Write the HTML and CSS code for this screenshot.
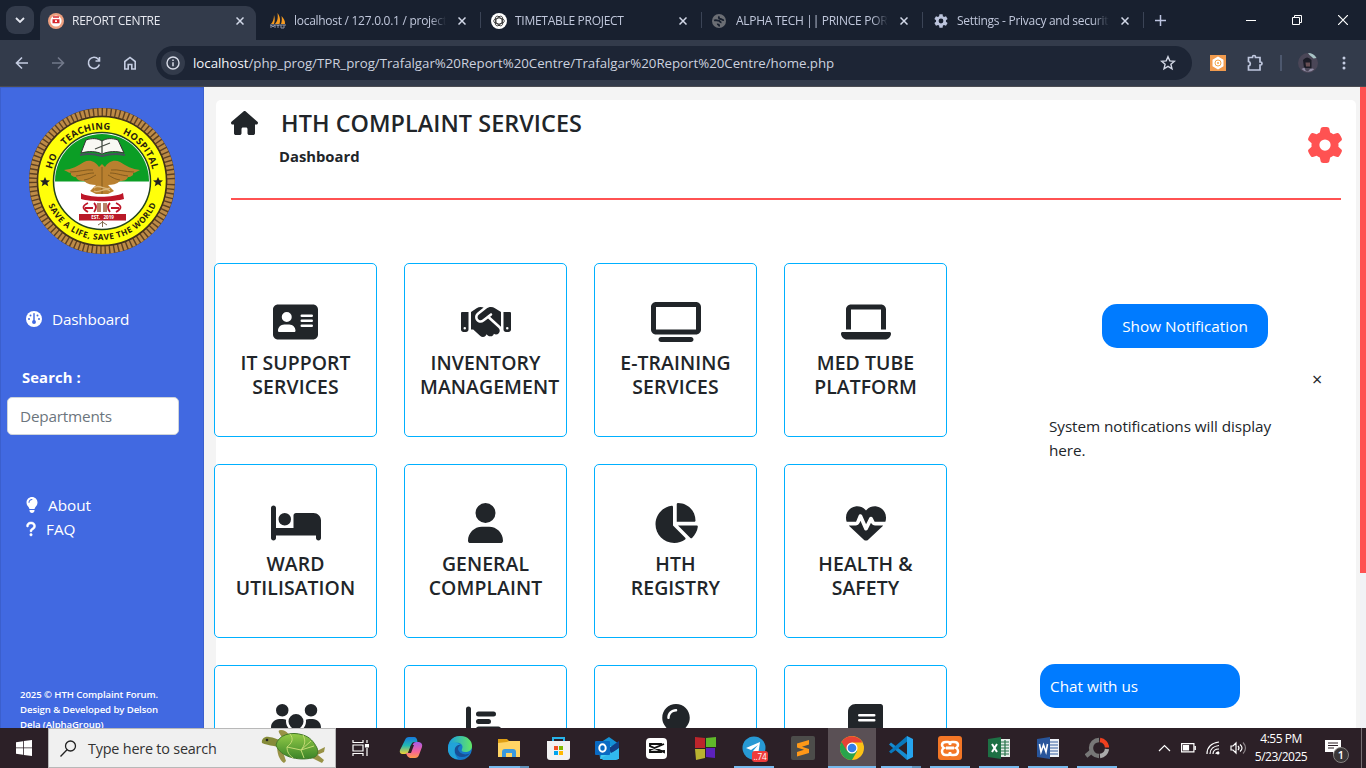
FILE: index.html
```html
<!DOCTYPE html>
<html lang="en">
<head>
<meta charset="utf-8">
<title>REPORT CENTRE</title>
<link rel="stylesheet" href="styles.css">
</head>
<body>
<header class="tabs">
  <div class="tab-search"><svg width="10" height="6" viewBox="0 0 10 6" fill="none" stroke="#e3e6ef" stroke-width="1.8"><path d="M1 1l4 4 4-4"/></svg></div>
  <div class="tab active">
    <svg class="fav" viewBox="0 0 16 16"><circle cx="8" cy="8" r="8" fill="#ee9f7f"/><circle cx="8" cy="8" r="5.600" fill="#fff"/><path d="M5 3.200h6v1.500H5zM4.500 6.200h7v4h-7z" fill="#d8292f"/><path d="M7 7.300h2v1.600H7z" fill="#fff"/></svg>
    <span class="tab-title">REPORT CENTRE</span><svg class="close" viewBox="0 0 8 8"><path d="M.5.5l7 7M7.5.5l-7 7"/></svg>
  </div>
  <div class="tab">
    <svg class="fav" viewBox="0 0 16 16"><path d="M1 11C3 9 4 5 4 2c1 3 1 6 0 9zM5 11C8 8 8 4 7.500 0c3 4 3 8 2 11zM11 11c1-3 1-5 .5-8 2 2 4 5 3.500 8z" fill="#f59a20"/><path d="M0 12h16M1 15v-3l2 2 2-2v3M7 12l1 1 1-1M8 13v2M11 12v3h3v-3" stroke="#8d92a4" stroke-width="1" fill="none"/></svg>
    <span class="tab-title">localhost / 127.0.0.1 / project</span><svg class="close" viewBox="0 0 8 8"><path d="M.5.5l7 7M7.5.5l-7 7"/></svg>
  </div>
  <div class="tab">
    <svg class="fav" viewBox="0 0 16 16"><circle cx="8" cy="8" r="8" fill="#fff"/><g fill="none" stroke="#222" stroke-width=".8"><ellipse cx="8" cy="8" rx="5.300" ry="3"/><ellipse cx="8" cy="8" rx="5.300" ry="3" transform="rotate(60 8 8)"/><ellipse cx="8" cy="8" rx="5.300" ry="3" transform="rotate(120 8 8)"/></g></svg>
    <span class="tab-title">TIMETABLE PROJECT</span><svg class="close" viewBox="0 0 8 8"><path d="M.5.5l7 7M7.5.5l-7 7"/></svg>
  </div>
  <div class="tab">
    <svg class="fav" viewBox="0 0 16 16"><circle cx="7" cy="8" r="7" fill="#6b6e74"/><path d="M2 7.500c2-.8 3 .2 4.500.2 1.500.2 1.500 1.800 3 1.600M7.500 3.500c-1.500 1.200-.5 2.500 1 2.500s1.500 1.500 3.500 1M5 11.500c1.500-.5 2.500.5 2 2" fill="none" stroke="#18202f" stroke-width="1.800"/></svg>
    <span class="tab-title">ALPHA TECH || PRINCE PORTFOLIO</span><svg class="close" viewBox="0 0 8 8"><path d="M.5.5l7 7M7.5.5l-7 7"/></svg>
  </div>
  <div class="tab">
    <svg class="fav" viewBox="0 0 24 24"><path fill="#bcc4dc" d="M19.400 13a7.500 7.500 0 0 0 0-2l2.500-2-2.400-4.200-3 1.200a7 7 0 0 0-1.700-1L14.400 2H9.600l-.4 3a7 7 0 0 0-1.700 1l-3-1.200L2.100 9l2.500 2a7.500 7.500 0 0 0 0 2l-2.500 2 2.400 4.200 3-1.200a7 7 0 0 0 1.700 1l.4 3h4.800l.4-3a7 7 0 0 0 1.700-1l3 1.200 2.400-4.200zM12 15.600a3.600 3.600 0 1 1 0-7.200 3.600 3.600 0 0 1 0 7.200z"/></svg>
    <span class="tab-title">Settings - Privacy and security</span><svg class="close" viewBox="0 0 8 8"><path d="M.5.5l7 7M7.5.5l-7 7"/></svg>
  </div>
  <svg class="new-tab" width="11" height="11" viewBox="0 0 11 11"><path d="M5.500 0v11M0 5.500h11" stroke="#bcc4e0" stroke-width="1.500"/></svg>
  <div class="win">
    <svg width="10" height="10" viewBox="0 0 10 10"><path d="M0 5.500h10"/></svg>
    <svg width="10" height="10" viewBox="0 0 10 10"><path d="M.5 2.500h7v7h-7zM2.500 2.500v-2h7v7h-2"/></svg>
    <svg width="10" height="10" viewBox="0 0 10 10"><path d="M0 0l10 10M10 0L0 10" stroke-width="1.200"/></svg>
  </div>
</header>
<nav class="toolbar">
  <svg class="tool" viewBox="0 0 16 16"><path d="M14 8H3M8 2.500L2.500 8 8 13.500"/></svg>
  <svg class="tool dim" viewBox="0 0 16 16"><path d="M2 8h11M8 2.500L13.500 8 8 13.500"/></svg>
  <svg class="tool" viewBox="0 0 16 16"><path d="M13.400 9.500A5.600 5.600 0 1 1 12.300 4.200L13.500 5.600M13.500 2v4H9.500"/></svg>
  <svg class="tool" viewBox="0 0 16 16"><path d="M2.800 14V6.500L8 2.400l5.200 4.100V14H9.800V9.500H6.200V14z"/></svg>
  <div class="omnibox">
    <span class="info"><svg width="14" height="14" viewBox="0 0 14 14"><circle cx="7" cy="7" r="6" fill="none" stroke="#d8dce8" stroke-width="1.400"/><path d="M7 6.200v4M7 3.600v1.500" stroke="#d8dce8" stroke-width="1.500"/></svg></span>
    <span class="url"><b>localhost</b>/php_prog/TPR_prog/Trafalgar%20Report%20Centre/Trafalgar%20Report%20Centre/home.php</span>
    <svg class="star" viewBox="0 0 16 16"><path d="M8 1.700l1.800 4.200 4.600.4-3.500 3 1.100 4.500L8 11.400l-4 2.400 1.100-4.500-3.500-3 4.600-.4z" fill="none" stroke="#d3d8e6" stroke-width="1.400"/></svg>
  </div>
  <svg class="ext" viewBox="0 0 16 16"><path fill="#f19b4e" d="M0 0h16v16H0z"/><path fill="#fff" d="M8 1.500l5.500 3.200v6.600L8 14.500l-5.500-3.200V4.700z"/><circle cx="8" cy="8" r="3" fill="none" stroke="#f3a64d"/><circle cx="8" cy="8" r="1" fill="#f3a64d"/></svg>
  <svg class="puzzle" viewBox="0 0 18 18"><path d="M2.500 3.500H6.500V3a1.500 1.500 0 0 1 3 0v.5h4.500v4.500h.5a1.500 1.500 0 0 1 0 3H14v5H2.500v-4a2.300 2.300 0 0 0 0-4.500z" fill="none" stroke="#c0c8df" stroke-width="1.700"/></svg>
  <i class="bar-sep"></i>
  <svg class="avatar" viewBox="0 0 20 20"><circle cx="10" cy="10" r="10" fill="#4a4657"/><path d="M10 0a10 10 0 0 1 8.500 5l-3 .5-4-3.500z" fill="#a9c4c6"/><path d="M5 7q4-5 8.500 0v8H6z" fill="#1b1c27"/><path d="M3.500 16l3-1.500 1 3 2.500 1 2-2.500 3-.5 1 1a9 9 0 0 1-12.500-.5z" fill="#8f8ba3"/><path d="M7.500 9.500h4.500v4H8z" fill="#684f54"/></svg>
  <svg class="dots" viewBox="0 0 4 14"><circle cx="2" cy="2" r="1.500"/><circle cx="2" cy="7" r="1.500"/><circle cx="2" cy="12" r="1.500"/></svg>
</nav>

<div class="page">
  <aside class="sidebar">
    <svg class="logo" viewBox="0 0 148 148">
      <defs><path id="arcTop" d="M23.500 84A51.500 51.500 0 1 1 124.500 84"/><path id="arcBottom" d="M15 74A59 59 0 0 0 133 74"/><clipPath id="disc"><circle cx="74" cy="74" r="47"/></clipPath></defs>
      <circle cx="74" cy="74" r="68.500" fill="none" stroke="#5d4021" stroke-width="9"/>
      <circle cx="74" cy="74" r="69" fill="none" stroke="#bd8b47" stroke-width="7.500" stroke-dasharray="3 1.400"/>
      <circle cx="74" cy="74" r="64.500" fill="#ffff0a" stroke="#42331b" stroke-width="1.500"/>
      <circle cx="74" cy="74" r="48.500" fill="#fff" stroke="#23431d" stroke-width="1.500"/>
      <path d="M26 74.500h96V20H26z" fill="#0b9e25" clip-path="url(#disc)"/>
      <path d="M53 46l5-13c6-2 11-2 16 1 5-3 10-3 16-1l6 13c-8-2-15-2-22 1-6-3-13-3-21-1z" fill="#f8f8f3" stroke="#333" stroke-width="1"/>
      <path d="M52 48c9-2 15-1 22 1 7-2 14-3 23-1" stroke="#46525c" stroke-width="2" fill="none"/><path d="M74 34v12M67 42l15-6" stroke="#434a42" stroke-width="1.300"/>
      <path d="M74 57l-3 3c-3-5-9-8-15-5-6 4-12 7-20 8 4 2 5 3 7 3-1 2 2 4 5 4 1 3 4 4 8 4 3 3 8 4 12 4l-6 6 6 3h12l6-3-6-6c4 0 9-1 12-4 4 0 7-1 8-4 3 0 6-2 5-4 2 0 3-1 7-3-8-1-14-4-20-8-6-3-12 0-15 5z" fill="#b9802f"/>
      <path d="M42 65c9 0 16-3 23-2M48 69c8-1 12-3 18-3M56 73c6-1 8-3 12-5M106 65c-9 0-16-3-23-2M100 69c-8-1-12-3-18-3M92 73c-6-1-8-3-12-5M74 60v27" stroke="#74501a" stroke-width=".8" fill="none"/>
      <path d="M66 81c4-5 12 3 16 0M66 84c4 3 12-5 16 0" stroke="#dbb678" stroke-width="1.300" fill="none"/>
      <path d="M53 86c7 5 33 5 42 0l1 6c-9 3-34 3-43 0z" fill="#bd1628"/>
      <path d="M60 96q-9 4 0 9M57 101h8M66 96q4 4 0 9M88 96q9 4 0 9M91 101h-8M82 96q-4 4 0 9" stroke="#bd1628" stroke-width="1.800" fill="none"/>
      <path d="M69 96h4v9h-4zM75 96h4v9h-4z" fill="#b98167"/><path d="M51 107h47v6.500H51z" fill="#b91928"/>
      <text class="est" x="74.500" y="112" text-anchor="middle">EST. &#160; 2019</text><path d="M74.500 114v6M70 118l4.500-3 4.500 3" stroke="#846c50" fill="none"/>
      <path d="M17 70l1.500 3.200 3.500.2-2.700 2.300 1 3.500-3.300-2-3.300 2 1-3.500-2.700-2.300 3.500-.2zM130 70l1.500 3.200 3.500.2-2.700 2.300 1 3.500-3.300-2-3.300 2 1-3.500-2.700-2.300 3.500-.2z" fill="#222"/>
      <text class="seal"><textPath href="#arcTop" startOffset="22">HO</textPath></text>
      <text class="seal"><textPath href="#arcTop" startOffset="49">TEACHING</textPath></text>
      <text class="seal"><textPath href="#arcTop" startOffset="112">HOSPITAL</textPath></text>
      <text class="seal small"><textPath href="#arcBottom" startOffset="25" textLength="136">SAVE A LIFE, SAVE THE WORLD</textPath></text>
    </svg>
    <a class="nav nav-dashboard"><svg width="16" height="16" viewBox="0 0 512 512"><circle cx="256" cy="256" r="256" fill="#fff"/><path d="M256 85v230" stroke="#4169e1" stroke-width="46" stroke-linecap="round"/><g fill="#4169e1"><circle cx="256" cy="352" r="62"/><circle cx="144" cy="144" r="32"/><circle cx="368" cy="144" r="32"/><circle cx="96" cy="256" r="32"/><circle cx="416" cy="256" r="32"/></g></svg><span>Dashboard</span></a>
    <label class="search-label">Search :</label>
    <input class="search" placeholder="Departments">
    <div class="links">
      <a class="nav"><svg width="12" height="16" viewBox="0 0 384 512"><path fill="#fff" d="M272 384c9.600-31.900 29.500-59.100 49.200-86.200 5.200-7.100 10.400-14.200 15.400-21.400 19.800-28.500 31.400-63 31.400-100.300C368 78.800 289.200 0 192 0S16 78.800 16 176c0 37.300 11.600 71.900 31.400 100.300 5 7.200 10.200 14.300 15.400 21.400 19.800 27.100 39.700 54.400 49.200 86.200H272zM192 512c44.200 0 80-35.800 80-80V416H112v16c0 44.200 35.800 80 80 80zM112 176c0 8.800-7.200 16-16 16s-16-7.200-16-16c0-61.900 50.100-112 112-112 8.800 0 16 7.200 16 16s-7.200 16-16 16c-44.200 0-80 35.800-80 80z"/></svg><span>About</span></a>
      <a class="nav"><svg width="10" height="16" viewBox="0 0 320 512"><path fill="#fff" stroke="#fff" stroke-width="16" d="M80 160c0-35.300 28.700-64 64-64h32c35.300 0 64 28.700 64 64v3.600c0 21.800-11.100 42.100-29.400 53.800l-42.200 27.100c-25.200 16.200-40.400 44.100-40.400 74V320c0 17.700 14.300 32 32 32s32-14.300 32-32v-1.400c0-8.200 4.200-15.800 11-20.200l42.200-27.100c36.600-23.600 58.800-64.100 58.800-107.700V160c0-70.700-57.300-128-128-128H144C73.300 32 16 89.300 16 160c0 17.700 14.300 32 32 32s32-14.300 32-32zm80 320a40 40 0 1 0 0-80 40 40 0 1 0 0 80z"/></svg><span>FAQ</span></a>
    </div>
    <footer class="copy">2025 © HTH Complaint Forum.<br>Design &amp; Developed by Delson<br>Dela (AlphaGroup)</footer>
  </aside>
  <main class="main">
    <section class="panel">
      <div class="heading">
        <svg width="27" height="24" viewBox="0 0 576 512"><path fill="#212529" d="M575.800 255.500c0 18-15 32.100-32 32.100h-32l.7 160.200c0 2.700-.2 5.400-.5 8.100V472c0 22.100-17.900 40-40 40H392c-22.100 0-40-17.900-40-40V384c0-17.700-14.300-32-32-32H256c-17.700 0-32 14.300-32 32v88c0 22.100-17.900 40-40 40H104c-22.100 0-40-17.900-40-40V287.600H32c-18 0-32-14-32-32.100 0-9 3-17 10-24L266.400 8c7-7 15-8 22-8s15 2 21 7L564.800 231.500c8 7 12 15 11 24z"/></svg>
        <div class="titles"><h1>HTH COMPLAINT SERVICES</h1><p>Dashboard</p></div>
        <svg class="gear" width="36" height="36" viewBox="0 0 512 512"><path fill="#ff5252" d="M495.900 166.600c3.200 8.700.5 18.400-6.400 24.600l-43.300 39.400c1.100 8.300 1.700 16.800 1.700 25.400s-.6 17.100-1.700 25.400l43.300 39.400c6.900 6.200 9.600 15.900 6.400 24.600-4.400 11.900-9.700 23.300-15.800 34.300l-4.700 8.100c-6.600 11-14 21.400-22.100 31.200-5.900 7.200-15.700 9.600-24.500 6.800l-55.700-17.700c-13.400 10.300-28.200 18.900-44 25.400l-12.500 57.100c-2 9.100-9 16.300-18.200 17.800-13.800 2.300-28 3.500-42.500 3.500s-28.700-1.200-42.500-3.500c-9.200-1.500-16.200-8.700-18.200-17.800l-12.500-57.100c-15.800-6.500-30.600-15.100-44-25.400L83.100 425.900c-8.800 2.800-18.600.3-24.500-6.800-8.100-9.800-15.500-20.200-22.100-31.200l-4.700-8.100c-6.100-11-11.400-22.400-15.800-34.300-3.200-8.700-.5-18.400 6.400-24.600l43.300-39.400C64.600 273.100 64 264.600 64 256s.6-17.100 1.700-25.400L22.400 191.200c-6.900-6.200-9.600-15.900-6.400-24.600 4.400-11.900 9.700-23.300 15.800-34.300l4.700-8.100c6.600-11 14-21.400 22.100-31.200 5.900-7.200 15.700-9.600 24.500-6.800l55.700 17.700c13.400-10.300 28.200-18.900 44-25.400l12.500-57.100c2-9.100 9-16.300 18.200-17.800C227.300 1.200 241.500 0 256 0s28.700 1.200 42.500 3.500c9.200 1.500 16.200 8.700 18.200 17.800l12.500 57.100c15.800 6.500 30.600 15.100 44 25.400l55.700-17.700c8.800-2.800 18.600-.3 24.500 6.800 8.100 9.800 15.500 20.200 22.100 31.200l4.700 8.100c6.100 11 11.400 22.400 15.800 34.300zM256 336a80 80 0 1 0 0-160 80 80 0 1 0 0 160z"/></svg>
      </div>
      <div class="content">
        <div class="grid">
          <div class="card"><svg width="45" height="40" viewBox="0 0 576 512"><path d="M64 32C28.700 32 0 60.700 0 96V416c0 35.300 28.700 64 64 64H512c35.300 0 64-28.700 64-64V96c0-35.300-28.700-64-64-64H64zm80 256h64c44.200 0 80 35.800 80 80 0 8.800-7.200 16-16 16H80c-8.800 0-16-7.200-16-16 0-44.200 35.800-80 80-80zm-32-96a64 64 0 1 1 128 0 64 64 0 1 1-128 0z"/><path d="M368 176H496M368 240H496M368 304H496" stroke="#fff" stroke-width="32" stroke-linecap="round"/></svg><h2>IT SUPPORT<br>SERVICES</h2></div>
          <div class="card"><svg width="50" height="40" viewBox="0 0 640 512"><path d="M323.400 85.200l-96.800 78.400c-16.100 13-19.200 36.400-7 53.100 12.900 17.800 38 21.300 55.300 7.800l99.300-77.200c7-5.400 17-4.200 22.500 2.800s4.200 17-2.800 22.500l-20.900 16.200L512 316.800V128h-.7l-3.900-2.500L434.800 79c-15.300-9.800-33.200-15-51.400-15-21.800 0-43 7.500-60 21.200zm22.800 124.400l-51.700 40.200C263 274.300 217.300 268 193.700 235.600c-22.200-30.500-16.600-73.100 12.700-96.800l83.200-67.300c-11.600-4.900-24.100-7.400-36.800-7.400C234 64 215.700 69.600 200 80l-72 48V352h28.200l91.400 83.400c19.600 17.900 49.900 16.500 67.800-3.100 5.500-6.100 9.200-13.200 11.100-20.600l17 15.600c19.500 17.900 49.900 16.600 67.800-2.900 4.500-4.900 7.800-10.600 9.900-16.500 19.400 13 45.800 10.300 62.100-7.500 17.900-19.500 16.600-49.900-2.900-67.800l-134.200-123zM16 128c-8.800 0-16 7.200-16 16V352c0 17.700 14.300 32 32 32H64c17.700 0 32-14.300 32-32V128H16zM48 320a16 16 0 1 1 0 32 16 16 0 1 1 0-32zM544 128V352c0 17.700 14.300 32 32 32h32c17.700 0 32-14.300 32-32V144c0-8.800-7.200-16-16-16H544zm32 208a16 16 0 1 1 32 0 16 16 0 1 1-32 0z"/></svg><h2>INVENTORY<br>MANAGEMENT</h2></div>
          <div class="card"><svg width="50" height="40" viewBox="0 0 640 512"><path d="M64 64V352H576V64H64zM0 64C0 28.700 28.700 0 64 0H576c35.300 0 64 28.700 64 64V352c0 35.300-28.700 64-64 64H64c-35.300 0-64-28.700-64-64V64zM128 448H512c17.700 0 32 14.300 32 32s-14.300 32-32 32H128c-17.700 0-32-14.300-32-32s14.300-32 32-32z" fill-rule="evenodd"/></svg><h2>E-TRAINING<br>SERVICES</h2></div>
          <div class="card"><svg width="50" height="40" viewBox="0 0 640 512"><path d="M128 32C92.700 32 64 60.700 64 96V352h64V96H512V352h64V96c0-35.300-28.700-64-64-64H128zM19.200 384C8.600 384 0 392.600 0 403.200 0 445.600 34.400 480 76.800 480H563.200c42.400 0 76.800-34.400 76.800-76.800 0-10.600-8.600-19.200-19.200-19.200H19.200z"/></svg><h2>MED TUBE<br>PLATFORM</h2></div>
          <div class="card"><svg width="50" height="40" viewBox="0 0 640 512"><path d="M32 32c17.700 0 32 14.300 32 32V320H288V160c0-17.700 14.300-32 32-32H544c53 0 96 43 96 96V448c0 17.700-14.300 32-32 32s-32-14.300-32-32V416H64v32c0 17.700-14.300 32-32 32S0 465.700 0 448V64C0 46.300 14.300 32 32 32zm144 96a80 80 0 1 1 0 160 80 80 0 1 1 0-160z"/></svg><h2>WARD<br>UTILISATION</h2></div>
          <div class="card"><svg width="35" height="40" viewBox="0 0 448 512"><path d="M224 256A128 128 0 1 0 224 0a128 128 0 1 0 0 256zm-45.700 48C79.800 304 0 383.800 0 482.300 0 498.700 13.300 512 29.700 512H418.300c16.400 0 29.700-13.300 29.700-29.700C448 383.800 368.200 304 269.700 304H178.300z"/></svg><h2>GENERAL<br>COMPLAINT</h2></div>
          <div class="card"><svg width="45" height="40" viewBox="0 0 576 512"><path d="M304 240V16.600c0-9 7-16.600 16-16.600C443.700 0 544 100.300 544 224c0 9-7.600 16-16.600 16H304zM32 272C32 150.700 122.100 50.300 239 34.300c9.200-1.300 17 6.100 17 15.400V288L412.500 444.500c6.700 6.700 6.200 17.700-1.500 23.100C371.800 495.600 323.800 512 272 512 139.500 512 32 404.600 32 272zm526.400 16c9.300 0 16.600 7.800 15.400 17-7.700 55.900-34.600 105.600-73.900 142.300-6 5.600-15.400 5.200-21.200-.7L320 288H558.400z"/></svg><h2>HTH<br>REGISTRY</h2></div>
          <div class="card"><svg width="40" height="40" viewBox="0 0 512 512"><path d="M228.300 469.100L47.600 300.400c-4.200-3.900-8.200-8.100-11.900-12.400h87c22.600 0 43-13.600 51.700-34.500l10.500-25.200 49.300 109.500c3.800 8.500 12.100 14 21.400 14.100s17.800-5 22-13.300L320 253.700l1.700 3.400c9.500 19 28.900 31 50.100 31H476.300c-3.700 4.300-7.700 8.500-11.900 12.400L283.700 469.100c-7.500 7-17.400 10.900-27.700 10.900s-20.200-3.900-27.700-10.900zM503.700 240h-132c-3 0-5.800-1.700-7.200-4.400l-23.200-46.300c-4.100-8.100-12.400-13.300-21.500-13.300s-17.400 5.100-21.500 13.300l-41.400 82.800L205.900 158.200c-3.900-8.700-12.700-14.300-22.200-14.100s-18.100 5.900-21.800 14.800l-31.800 76.300c-1.200 3-4.200 4.900-7.400 4.900H16c-2.600 0-5 .4-7.300 1.100C3 225.200 0 208.200 0 190.900v-5.800c0-69.900 50.500-129.500 119.400-141C165 36.500 211.400 51.400 244 84l12 12 12-12c32.600-32.600 79-47.500 124.600-39.900C461.500 55.600 512 115.200 512 185.100v5.800c0 16.900-2.800 33.500-8.300 49.100z"/></svg><h2>HEALTH &amp;<br>SAFETY</h2></div>
          <div class="card"><svg width="50" height="40" viewBox="0 0 640 512"><path d="M144 0a80 80 0 1 1 0 160A80 80 0 1 1 144 0zM512 0a80 80 0 1 1 0 160A80 80 0 1 1 512 0zM0 298.700C0 239.800 47.800 192 106.700 192h42.700c15.900 0 31 3.500 44.600 9.700-1.300 7.200-1.900 14.700-1.900 22.300 0 38.200 16.800 72.500 43.300 96H21.300C9.600 320 0 310.400 0 298.700zM405.300 320c26-23.500 42.600-57.800 42.600-96 0-7.600-.7-15-1.900-22.300 13.600-6.300 28.700-9.700 44.600-9.700h42.700C592.200 192 640 239.800 640 298.700c0 11.800-9.600 21.300-21.300 21.300H405.300zM224 224a96 96 0 1 1 192 0 96 96 0 1 1-192 0z"/></svg></div>
          <div class="card"><svg width="40" height="40" viewBox="0 0 512 512"><path d="M32 64V448H480M160 128H352M160 224H288M160 320H416" fill="none" stroke="#212529" stroke-width="64" stroke-linecap="round"/></svg></div>
          <div class="card"><svg width="30" height="40" viewBox="0 0 384 512"><path d="M272 384c9.600-31.900 29.500-59.100 49.200-86.200 5.200-7.100 10.400-14.200 15.400-21.400 19.800-28.500 31.400-63 31.400-100.300C368 78.800 289.200 0 192 0S16 78.800 16 176c0 37.300 11.600 71.900 31.400 100.300 5 7.200 10.200 14.300 15.400 21.400 19.800 27.100 39.700 54.400 49.200 86.200H272zM112 176c0 8.800-7.200 16-16 16s-16-7.200-16-16c0-61.900 50.100-112 112-112 8.800 0 16 7.200 16 16s-7.200 16-16 16c-44.200 0-80 35.800-80 80z"/></svg></div>
          <div class="card"><svg width="35" height="40" viewBox="0 0 448 512"><path d="M96 0C43 0 0 43 0 96V416c0 53 43 96 96 96H448V32c0-17.700-14.300-32-32-32z"/><path d="M144 144H336M144 208H336" stroke="#fff" stroke-width="32" stroke-linecap="round"/></svg></div>
        </div>
        <div class="notices">
          <button class="show">Show Notification</button>
          <span class="dismiss">×</span>
          <p class="message">System notifications will display<br>here.</p>
          <button class="chat">Chat with us</button>
        </div>
      </div>
    </section>
  </main>
  <div class="scroll"><i></i></div>
</div>

<footer class="taskbar">
  <div class="slot start"><svg width="16" height="16" viewBox="0 0 16 16"><path fill="#fff" d="M0 2.200l7-1v6.300H0zM7.800 1L16 0v7.500H7.800zM0 8.300h7v6.400l-7-1zM7.800 8.300H16V16l-8.200-1.100z"/></svg></div>
  <div class="find">
    <svg width="17" height="17" viewBox="0 0 17 17" fill="none" stroke="#222" stroke-width="1.300"><circle cx="10.500" cy="6" r="5"/><path d="M7 9.800L.5 16.500"/></svg>
    <span>Type here to search</span>
    <svg class="turtle" width="66" height="36" viewBox="0 0 66 36"><defs><linearGradient id="shell" x2="0" y2="1"><stop stop-color="#94cc48"/><stop offset="1" stop-color="#3b8428"/></linearGradient></defs><path d="M24 11C20 5 16 1 21 1c6 0 9 6 11 9zM17 16c0 8 2 15 7 18l2-2-3-9 6-5zM53 22l11 9-2 3-10-5-4-4zM57 22l8-4-1 5-7 3z" fill="#989246"/><path d="M2 14C1 10 5 7 9 8c5 0 8 3 12 3l-3 7C12 16 9 17 2 14z" fill="#858b39"/><path d="M16 16C18 6 31 2 43 6c7 2 11 7 14 13 2 5 0 9-5 10-14 3-32-1-36-13z" fill="url(#shell)" stroke="#44772b"/><path d="M30 5c4 5 2 9-3 13 0 5 2 8 6 11M43 6c3 6 2 10-2 15l3 8M27 18l14 3 13-4M51 12l-10 9" stroke="#c5db75" fill="none"/><circle cx="7" cy="11" r="1.300" fill="#222"/></svg>
  </div>
  <div class="slot view"><svg width="17" height="16" viewBox="0 0 17 16" fill="none" stroke="#fff" stroke-width="1.200"><path d="M1 0v2.500h10V0M1 5h10v6H1zM1 16v-2.500h10V16M15 0v3M15 8v8"/><path d="M13.500 4.500h3v2.500h-3z" fill="#fff"/></svg></div>
  <div class="apps">
    <div class="app"><svg viewBox="0 0 24 24"><defs><linearGradient id="ca" x2="0" y2="1"><stop stop-color="#1679dd"/><stop offset=".5" stop-color="#22b9b1"/><stop offset="1" stop-color="#f2d233"/></linearGradient><linearGradient id="cb" x2="0" y2="1"><stop stop-color="#a65be9"/><stop offset=".6" stop-color="#f66498"/><stop offset="1" stop-color="#ff9b48"/></linearGradient></defs><path d="M6 4q1-3 4-3h5q3 0 3.500 5H15q-2 0-3 3l-2 6q-1 3-4 3H3q-3-1-2-4z" fill="url(#ca)"/><path d="M17 6h3q4 1 3 5l-3 8q-1 3-4 3h-5q-3-1-4-5h2q2 0 3-3l2-6q1-2 3-2z" fill="url(#cb)"/><path d="M12 9h3l-3 8H9z" fill="#2c2027"/></svg></div>
    <div class="app"><svg viewBox="0 0 24 24"><defs><linearGradient id="ed"><stop stop-color="#189be5"/><stop offset="1" stop-color="#63e764"/></linearGradient></defs><circle cx="12" cy="12" r="12" fill="#1579ca"/><path d="M0 11C1 3 7 0 12 0c8 0 12 5 12 10 0 4-3 6-7 6-3 0-4-1-3-3 2-4-2-7-7-6-3 0-6 2-7 4z" fill="url(#ed)"/><path d="M8 8c-4 5-1 13 6 13 4 0 7-2 8-4-4 3-11 1-12-4 0-2 1-3 3-4z" fill="#184f96"/><path d="M0 11c2-5 9-6 12-2-5-1-8 7-2 14C3 23-1 17 0 11z" fill="#22a3d9"/></svg></div>
    <div class="app open split"><svg viewBox="0 0 24 24"><path d="M1 3h9l2 2h10v14H1z" fill="#df9f14"/><path d="M1 7l9-1 2-1h11v16H1z" fill="#ffd464"/><path d="M5 21v-5q0-3 3-3h8q3 0 3 3v5h-4v-4H9v4z" fill="#3999df"/></svg></div>
    <div class="app"><svg viewBox="0 0 24 24"><path d="M7 8V2h11v6" fill="none" stroke="#27b3e9" stroke-width="2"/><path d="M1 5h23v16q0 3-3 3H4q-3 0-3-3z" fill="#f2f2f2"/><path d="M8 10h4v4H8z" fill="#f25022"/><path d="M13 10h4v4h-4z" fill="#7fba00"/><path d="M8 15h4v4H8z" fill="#00a4ef"/><path d="M13 15h4v4h-4z" fill="#ffb900"/></svg></div>
    <div class="app"><svg viewBox="0 0 24 24"><path d="M3 8L14 1l10 7v14H5z" fill="#1492d6"/><path d="M9 10h15v13H5z" fill="#43caef"/><path d="M14 12l10-7v7l-8 6z" fill="#113f86"/><path d="M6 22l18-9v9q-1 2-3 2H8z" fill="#31b8ed"/><rect y="5" width="15" height="14" rx="1" fill="#096ac3"/><ellipse cx="7.500" cy="12" rx="3.200" ry="3.700" stroke="#fff" stroke-width="2" fill="none"/></svg></div>
    <div class="app"><svg viewBox="0 0 24 24"><rect x="2" y="2" width="21" height="21" rx="4" fill="#fff"/><path d="M17 10V8H6v2l14 6v-1L6 16h11v-2M20 8L6 14v2h11" fill="none" stroke="#111" stroke-width="1.900"/></svg></div>
    <div class="app"><svg viewBox="0 0 24 24"><path d="M2 1l10 1v10H2z" fill="#bc252b"/><path d="M13 2l10-1v10H13z" fill="#60b82a"/><path d="M2 13h10v9L3 24z" fill="#b9b330"/><path d="M13 12h9v10l-9-1z" fill="#5c22bc"/></svg></div>
    <div class="app open"><svg viewBox="0 0 24 24"><circle cx="12" cy="12" r="11.500" fill="#2799d4"/><path d="M4 12l14-6-2 13-5-4 5-6-7 5z" fill="#fff"/></svg><span class="badge">..74</span></div>
    <div class="app"><svg viewBox="0 0 24 24"><rect width="24" height="24" rx="2" fill="#4c4c4a"/><path d="M18 4v4.500L11 10.700 18 13v4L6 20.500V16l7-2.200L6 11.500v-4z" fill="#ff9817"/></svg></div>
    <div class="app open current"><svg viewBox="0 0 24 24"><circle cx="12" cy="12" r="12" fill="#fbc116"/><path d="M1.600 6A12 12 0 0 0 12 24l5.200-9L12 12z" fill="#28a34b"/><path d="M1.600 6A12 12 0 0 1 22.400 6.500H12L7 15z" fill="#e64235"/><circle cx="12" cy="12" r="5.500" fill="#fff"/><circle cx="12" cy="12" r="4.300" fill="#337ee9"/></svg></div>
    <div class="app open split"><svg viewBox="0 0 24 24"><path d="M0 8.500l2-2 17 13-1 4.500z" fill="#168bcf"/><path d="M0 15.500l2 2L19 5l-1-5z" fill="#0878bd"/><path d="M18 0l6 3v18l-6 3z" fill="#26a4ee"/></svg></div>
    <div class="app open"><svg viewBox="0 0 24 24"><rect width="24" height="24" rx="3" fill="#f37626"/><path d="M8 6h2q2 0 2 3 0-3 2-3h2q4 0 4 3 0 2-2 3 2 1 2 3 0 4-4 4h-2q-2 0-2-3 0 3-2 3H8q-4 0-4-4 0-2 2-3-2-1-2-3 0-3 4-3z" fill="none" stroke="#fff" stroke-width="2.500"/><path d="M8 12h8" stroke="#fff" stroke-width="3"/></svg></div>
    <div class="app open"><svg viewBox="0 0 24 24"><path d="M12 3h11v18H12z" fill="#e5eee9"/><path d="M14 6h8M14 9h8M14 12h8M14 15h8M14 18h8M18 4v16" stroke="#26744a" stroke-width="1.200"/><path d="M1 3l13-2v22L1 21z" fill="#1d7044"/><path d="M5 8l5 8M10 8l-5 8" stroke="#fff" stroke-width="2"/></svg></div>
    <div class="app open"><svg viewBox="0 0 24 24"><path d="M12 3h11v18H12z" fill="#edf1f8"/><path d="M14 6h8M14 9h8M14 12h8M14 15h8M14 18h8" stroke="#375f9e" stroke-width="1.200"/><path d="M1 3l13-2v22L1 21z" fill="#28559b"/><path d="M3.500 8l1.500 8 2.500-7L10 16l1.500-8" fill="none" stroke="#fff" stroke-width="1.600"/></svg></div>
    <div class="app open"><svg viewBox="0 0 24 24" fill="none" stroke-width="4.300"><path d="M14 4a8 8 0 1 0 0 16" stroke="#777"/><path d="M15 4a8 8 0 0 1 7 7.500" stroke="#f0401f"/><path d="M22 13a8 8 0 0 1-7 7" stroke="#aaa"/><path d="M7 15l-6 5" stroke="#777"/></svg></div>
  </div>
  <div class="tray">
    <svg width="13" height="8" viewBox="0 0 13 8"><path d="M1 7l5.500-5.500L12 7"/></svg>
    <svg width="15" height="10" viewBox="0 0 15 10"><path d="M.6.6h12.300v8.300H.6zM14.300 3v4"/><path d="M2.500 2.500h5v4.500h-5z" fill="#fff"/></svg>
    <svg width="14" height="14" viewBox="0 0 14 14"><path d="M1 13C1 6 6 2 13 1M4 13c0-5 4-8 9-8.500M7 13c0-3 2-5 6-5M10 13q0-2 3-2"/><circle cx="12" cy="12" r="1.500" fill="#fff" stroke="none"/></svg>
    <svg width="17" height="14" viewBox="0 0 17 14"><path d="M1 5h2l3-3v10L3 9H1zM8 5q2 2 0 4M10 3.500q4 3.500 0 7"/><path d="M13 1.500q5 5.500 0 11" stroke="#8a8286"/></svg>
    <div class="clock"><span>4:55 PM</span><span>5/23/2025</span></div>
    <div class="bell"><svg width="16" height="16" viewBox="0 0 16 16"><path d="M0 0h16v12h-5l-3 4v-4H0z" fill="#fff" stroke="none"/><path d="M3 3h10M3 5.500h10M3 8h6" stroke="#2c2027"/></svg><b>1</b></div>
  </div>
</footer>
</body>
</html>
```
FILE: styles.css
```css
* { box-sizing: border-box; }
body { margin: 0; width: 1366px; height: 768px; overflow: hidden; display: flex; flex-direction: column; font: 15.3px/24px "Open Sans", "Noto Sans", sans-serif; color: #212529; background: #f4f4f4; }
svg { display: block; flex: none; }
h1, h2, p { margin: 0; }

/* browser tabs */
.tabs { height: 40px; flex: none; display: flex; align-items: center; background: #18202f; padding-left: 6px; }
.tab-search { width: 28px; height: 28px; border-radius: 9px; background: #333b4b; display: grid; place-items: center; margin-right: 6px; flex: none; }
.tab { width: 221px; height: 34px; flex: none; display: flex; align-items: center; padding: 0 16px 5px 9px; position: relative; color: #c1c8dc; font-size: 12px; letter-spacing: -.28px; margin-top: 6px; }
.tab.active { width: 216px; margin-right: 5px; padding-left: 8px; padding-right: 12px; background: #333b4b; border-radius: 10px 10px 0 0; color: #e7e9f0; }
.tab:not(.active)::after { content: ""; position: absolute; right: 1px; top: 6px; width: 1px; height: 16px; background: #3b4456; }
.fav { width: 16px; height: 16px; margin-right: 8px; }
.tab-title { width: 152px; white-space: nowrap; overflow: hidden; mask-image: linear-gradient(90deg, #000 136px, transparent 152px); line-height: 20px; }
.close { width: 8px; height: 8px; margin-left: auto; fill: none; stroke: #d2d8e8; stroke-width: 1.5; }
.new-tab { margin-left: 10px; }
.win { margin-left: auto; margin-right: 18px; display: flex; gap: 36px; }
.win svg { fill: none; stroke: #fff; stroke-width: 1; }

/* browser toolbar */
.toolbar { height: 47px; flex: none; display: flex; align-items: center; padding: 0 0 1px 14px; background: #333b4b; border-bottom: 1px solid #4b4c52; }
.tool { width: 16px; height: 16px; margin-right: 20px; fill: none; stroke: #c5cde2; stroke-width: 1.6; }
.dim { stroke: #72798a; }
.omnibox { width: 1036px; height: 34px; margin-left: -2px; border-radius: 17px; background: #1d2535; display: flex; align-items: center; padding: 0 16px 0 5px; }
.info { width: 24px; height: 24px; border-radius: 50%; background: #333b4b; display: grid; place-items: center; }
.url { margin-left: 8px; color: #ccd1df; font-size: 13.3px; letter-spacing: -.03px; white-space: nowrap; }
.url b { color: #f4f5fa; font-weight: 400; }
.star { width: 16px; height: 16px; margin-left: auto; }
.ext { width: 16px; height: 16px; margin-left: 18px; }
.puzzle { width: 18px; height: 18px; margin-left: 20px; }
.bar-sep { width: 2px; height: 16px; background: #4d586e; margin-left: 16px; }
.avatar { width: 20px; height: 20px; margin-left: 16px; }
.dots { width: 4px; height: 14px; margin-left: 24px; fill: #c5cde2; }

/* page */
.page { height: 641px; flex: none; display: flex; overflow: hidden; }
.sidebar { width: 204px; height: 700px; flex: none; background: #4169e1; color: #fff; border: 1px solid #3b5fcd; display: flex; flex-direction: column; }
.logo { width: 148px; height: 148px; margin: 19px 0 0 27px; }
.seal { font: 700 9.3px "Open Sans", sans-serif; letter-spacing: .35px; fill: #29210c; }
.seal.small { font-size: 8.3px; letter-spacing: 0; }
.est { font: 700 4.5px "Open Sans", sans-serif; fill: #fff; }
.nav { display: flex; align-items: center; height: 24px; padding-left: 25px; }
.nav span { margin-left: 10px; }
.nav-dashboard { margin-top: 52px; letter-spacing: -.2px; }
.search-label { font-weight: 700; font-size: 14.8px; margin: 34px 0 0 21px; height: 24px; letter-spacing: .1px; }
.search { margin: 8px 0 0 6px; width: 172px; height: 38px; border: 1px solid #ced4da; border-radius: 5px; padding: 0 12px; font: inherit; letter-spacing: -.2px; background: #fff; }
.search::placeholder { color: #6c757d; opacity: 1; }
.links { margin-top: 58px; }
.copy { margin: 146px 0 0 19px; font-size: 9.6px; line-height: 15px; font-weight: 600; letter-spacing: -.09px; white-space: nowrap; }
.main { flex: 1; padding: 13px 4px 0 12px; background: #f4f4f4; }
.panel { height: 760px; background: #fff; border-radius: 5px; }
.heading { margin: 0 15px; height: 100px; border-bottom: 2px solid #ff5252; display: flex; padding-top: 11px; }
.titles { margin: -1px 0 0 21px; }
.titles h1 { font-size: 23.4px; line-height: 26px; font-weight: 600; padding-left: 2px; white-space: nowrap; letter-spacing: .05px; }
.titles p { font-size: 14.8px; font-weight: 700; margin-top: 8px; }
.gear { margin: 16px -1.5px 0 auto; }
.content { display: flex; }
.grid { display: grid; grid-template-columns: repeat(4, 163px); grid-auto-rows: 174px; gap: 27px; margin: 63px 0 0 -2px; }
.card { background: #fff; border: 1px solid #00b0ff; border-radius: 5px; display: flex; flex-direction: column; align-items: center; padding: 38px 15px 0; }
.card svg { fill: #212529; }
.card h2 { width: 131px; font-size: 19.4px; line-height: 24px; font-weight: 600; text-align: center; margin-top: 9px; white-space: nowrap; letter-spacing: .08px; }
.notices { margin: 104px 0 0 93px; width: 282px; display: flex; flex-direction: column; }
button { font: inherit; color: #fff; background: #007bff; border: 0; border-radius: 15px; height: 44px; padding: 0; flex: none; }
.show { width: 166px; margin-left: 62px; }
.dismiss { align-self: flex-end; margin: 19px 0 0; width: 10px; text-align: center; font-size: 18px; }
.message { margin: 23px 0 0 9px; white-space: nowrap; letter-spacing: -.08px; }
.chat { width: 200px; margin-top: 202px; text-align: left; padding-left: 10px; }
.scroll { width: 6px; background: #f1f2f6; }
.scroll i { display: block; height: 486px; background: #ff5252; }

/* taskbar */
.taskbar { height: 40px; flex: none; display: flex; background: #2c2027; }
.slot { width: 48px; display: grid; place-items: center; }
.find { width: 288px; background: #f0f0f0; border: 1px solid #b8b8b8; display: flex; align-items: center; padding-left: 11px; font-size: 14.4px; color: #333; }
.find span { margin: 1px 0 0 11px; white-space: nowrap; letter-spacing: -.2px; }
.turtle { margin: -2px 9px 0 auto; }
.apps { display: flex; margin-left: 2px; }
.app { width: 49px; height: 40px; display: grid; place-items: center; position: relative; }
.app svg { width: 24px; height: 24px; }
.app.open::after { content: ""; position: absolute; bottom: 0; left: 5px; width: 40px; height: 2px; background: #76b9ed; }
.app.split::after { background: linear-gradient(90deg, #76b9ed 31px, #5f91ba 31px); }
.app.current { background: linear-gradient(90deg, transparent 1px, #5a5055 1px); }
.app.current::after { left: 1px; width: 48px; }
.badge { position: absolute; left: 23px; top: 23px; width: 16px; height: 11px; border-radius: 3px; background: #ee3b3b; color: #fff; font-size: 8.2px; line-height: 11px; text-align: center; letter-spacing: -.2px; }
.tray { flex: 1; display: flex; align-items: center; padding-left: 37px; border-right: 1px solid #776f73; margin-right: 4px; gap: 10px; }
.tray svg { fill: none; stroke: #fff; stroke-width: 1.2; }
.clock { width: 62px; margin-left: -7px; display: flex; flex-direction: column; align-items: center; color: #fff; font-size: 12px; line-height: 18px; letter-spacing: -.5px; white-space: nowrap; }
.bell { position: relative; margin-left: 3px; }
.bell b { position: absolute; left: 8px; top: 7px; width: 16px; height: 16px; border: 1px solid #84817f; border-radius: 50%; background: #3a3637; color: #fff; font-size: 11px; line-height: 14px; text-align: center; font-weight: 600; }
```
